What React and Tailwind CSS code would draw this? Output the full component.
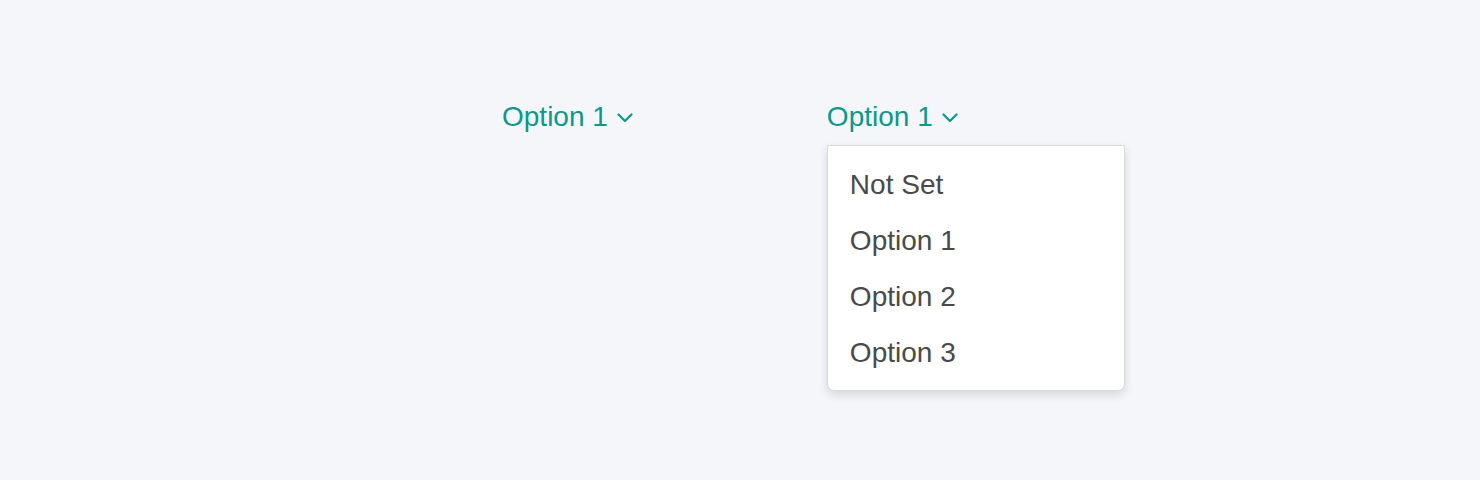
import React from "react";

function Chevron() {
  return (
    <svg width="16" height="10" viewBox="0 0 16 10" fill="none" className="ml-[9px] mt-[2px]">
      <path d="M1.5 1.5 L8 8 L14.5 1.5" stroke="#08998a" strokeWidth="2.2" strokeLinecap="round" strokeLinejoin="round" />
    </svg>
  );
}

function Trigger() {
  return (
    <button className="flex items-center text-[28px] leading-[32px] text-[#08998a]">
      <span>Option 1</span>
      <Chevron />
    </button>
  );
}

export default function App() {
  const items = ["Not Set", "Option 1", "Option 2", "Option 3"];
  return (
    <div
      className="w-[1480px] h-[480px] bg-[#f5f6fa] pt-[101px] pl-[502px]"
      style={{ fontFamily: '"Liberation Sans", Arial, sans-serif' }}
    >
      <div className="flex gap-[194px] items-start">
        <Trigger />
        <div className="relative">
          <Trigger />
          <div className="absolute left-0 top-[44px] w-[298px] bg-white border border-[#d8d8da] rounded-b-[7px] shadow-[0_4px_10px_rgba(0,0,0,0.12)] pt-[11px] pb-[9px]">
            {items.map((it) => (
              <div key={it} className="pl-[22px] text-[28px] leading-[56px] text-[#4a4a4a]">
                {it}
              </div>
            ))}
          </div>
        </div>
      </div>
    </div>
  );
}
